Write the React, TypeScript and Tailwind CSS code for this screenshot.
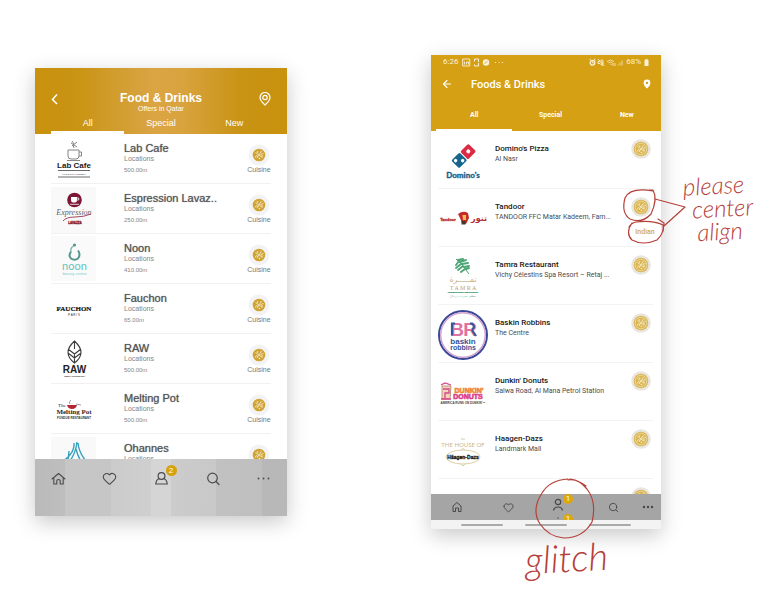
import type { ReactNode } from "react";
import { Heart, Search, ArrowLeft } from "lucide-react";

const sans = "font-['Liberation_Sans',sans-serif]";
const roboto = "font-['Roboto',sans-serif]";
const SANS = "Liberation Sans, sans-serif";
const SERIF = "Liberation Serif, serif";

type Item = { name: string; sub: string; distance?: string; tag?: string; logo: ReactNode };

/* ---------- logos of the design mock-up (46 x 49 each) ---------- */

const LabCafe = (
  <>
    <path d="M17 16h11v6q0 3-3 3h-5q-3 0-3-3zM28 18h2.500v4H28M16 26.500h13M23 14l-1-3M20 9l6 4M26 8l-5 4M21 7l2 3" fill="none" stroke="#777" strokeWidth=".9" />
    <text x="23" y="34" textAnchor="middle" fontSize="8" fontWeight="bold" fill="#251818" fontFamily="Liberation Sans Narrow, Liberation Sans, sans-serif">Lab Cafe</text>
    <path d="M7 36.500h32M7 43h32" stroke="#444" strokeWidth=".8" />
    <text x="23" y="40.500" textAnchor="middle" fontSize="2" fill="#333" fontFamily={SANS}>• THE DIGITAL CORNER •</text>
  </>
);
const Expression = (
  <>
    <rect x="0" y="3" width="45" height="46" fill="#faf9fa" />
    <circle cx="23.500" cy="16" r="7.300" fill="#7b1734" />
    <path d="M20 13h6v3q0 2.500-2 2.500h-2q-2 0-2-2.500z" fill="#fff" />
    <path d="M26 14h1.700v2H26M19 20.300h9" fill="none" stroke="#fff" strokeWidth=".8" />
    <text x="23" y="31" textAnchor="middle" fontSize="8" fontStyle="italic" fill="#666" fontFamily={SERIF}>Expression</text>
    <path d="M12 37q3-4 12-4t16-3" fill="none" stroke="#a54962" strokeWidth="1" />
    <text x="24" y="40" textAnchor="middle" fontSize="3" fontWeight="bold" fill="#7b1734" stroke="#7b1734" strokeWidth=".3" fontFamily={SANS}>LAVAZZA</text>
  </>
);
const NoonLogo = (
  <>
    <rect x="0" y="2" width="45" height="45" fill="#fafafa" />
    <path d="M20 17.500q-3 4 0 7 3.500 2.500 7 0 3-4 0-8" fill="none" stroke="#56958d" strokeWidth="2" />
    <path d="M20 18q-1-4 2.500-6" fill="none" stroke="#79b5ab" strokeWidth="1.400" />
    <circle cx="23.500" cy="11" r="1.600" fill="#56958d" />
    <text x="23.500" y="36" textAnchor="middle" fontSize="11" fill="#63c4bd" fontFamily="Lato, sans-serif">noon</text>
    <text x="23.500" y="41" textAnchor="middle" fontSize="4" fill="#7ecdc7" fontFamily={SANS}>beauty centre</text>
  </>
);
const FauchonLogo = (
  <>
    <text x="23" y="27" textAnchor="middle" fontSize="7" fontWeight="bold" fill="#111" stroke="#111" strokeWidth=".2" fontFamily={SERIF}>FAUCHON</text>
    <text x="23" y="32" textAnchor="middle" fontSize="3" fill="#333" fontFamily={SANS}>P A R I S</text>
  </>
);
const RawLogo = (
  <>
    <path d="M23.500 7q-13 12 0 22q13-10 0-22zM23.500 7v8M23.500 20v9M17 15l6.500 5 6.500-5M17 19l6.500 5 6.500-5" fill="none" stroke="#3c3c3c" strokeWidth="1.100" />
    <text x="23.500" y="39" textAnchor="middle" fontSize="10" fontWeight="bold" fill="#222" fontFamily={SANS}>RAW</text>
    <text x="23.500" y="42.500" textAnchor="middle" fontSize="2" fontWeight="bold" fill="#222" fontFamily={SANS}>SIMPLY NOURISHING</text>
  </>
);
const MeltingLogo = (
  <>
    <text x="11" y="23" textAnchor="middle" fontSize="5" fill="#222" fontFamily={SERIF}>The</text>
    <path d="M16 21h10q-1 4-5 4t-5-4" fill="#b42636" />
    <path d="M19 20q-2-2 1-4M25 20l5 1" fill="none" stroke="#777" strokeWidth=".7" />
    <text x="23" y="30" textAnchor="middle" fontSize="7" fontWeight="bold" fill="#332424" fontFamily={SERIF}>Melting Pot</text>
    <text x="23" y="35" textAnchor="middle" fontSize="3" fontWeight="bold" fill="#333" fontFamily={SANS}>FONDUE RESTAURANT</text>
  </>
);
const OhannesLogo = (
  <>
    <rect x="0" y="3" width="45" height="46" fill="#f9f9f9" />
    <path d="M23 9q1 10-11 18M26 8q-1 10-7 19M27 9q1 10 8 18M25 15q2 8 5 12M18 17l-1 10" fill="none" stroke="#39a3bf" strokeWidth="1.400" />
  </>
);

/* ---------- logos of the app build (50 x 58 each) ---------- */

const DominosLogo = (
  <>
    <g transform="rotate(45 25 25)">
      <rect x="20" y="12.500" width="11" height="11.500" rx="1.500" fill="#dd2b45" />
      <rect x="20" y="25" width="11" height="11.500" rx="1.500" fill="#17648c" />
      <circle cx="25.500" cy="18" r="2" fill="#fff" />
      <circle cx="23" cy="33.500" r="1.700" fill="#fff" />
      <circle cx="28" cy="28.500" r="1.700" fill="#fff" />
    </g>
    <text x="25" y="47" textAnchor="middle" fontSize="8" fontWeight="900" fill="#17648c" stroke="#17648c" strokeWidth=".3" fontFamily="Lato, sans-serif">Domino's</text>
  </>
);
const TandoorLogo = (
  <>
    <text x="10" y="32" textAnchor="middle" fontSize="4" fontWeight="bold" fill="#b52a35" stroke="#b52a35" strokeWidth=".3" fontFamily={SANS}>Tandoor</text>
    <path d="M20 25q5-4 10-1l1 5-3 6-4-1-2-5z" fill="#c62b2c" />
    <path d="M24.500 26h3.500v5h-3z" fill="#f0c14e" />
    <path d="M23.500 32h4v3.500h-4z" fill="#47372c" />
    <text x="41" y="32" textAnchor="middle" fontSize="8" fontWeight="bold" fill="#b52a35" fontFamily="DejaVu Sans, sans-serif">تنور</text>
  </>
);
const TamraLogo = (
  <>
    <path d="M31 27Q25 18 18 12" fill="none" stroke="#4da476" strokeWidth="1" />
    <path d="M21 14l-3 4M23 17l-5 4M25 19l-5 4M27 22l-4 3M20 13l5-1M22 15l6-2M24 17l6-1M26 20l5-1M28 22l3-1" fill="none" stroke="#4da476" strokeWidth="1.900" strokeLinecap="round" />
    <text x="25" y="35" textAnchor="middle" fontSize="8" fill="#c5b492" fontFamily="DejaVu Sans, sans-serif">تمـــــرة</text>
    <text x="25" y="43" textAnchor="middle" fontSize="6" fill="#b5a47f" fontFamily={SERIF}>T  A  M  R  A</text>
    <text x="25" y="46" textAnchor="middle" fontSize="2" fontWeight="bold" fill="#3c9a70" stroke="#3c9a70" strokeWidth=".2" fontFamily={SANS}>INTERNATIONAL RESTAURANT</text>
    <text x="25" y="50" textAnchor="middle" fontSize="3" fill="#72b598" fontFamily={SANS}>مطعم تمرة — ريتاج</text>
  </>
);
const BaskinLogo = (
  <>
    <circle cx="25" cy="30" r="24" fill="#fff" stroke="#3a4997" strokeWidth="2" />
    <circle cx="25" cy="30" r="22.300" fill="none" stroke="#d2a3cf" strokeWidth="1.500" />
    <text x="19" y="31" textAnchor="middle" fontSize="19" fontWeight="bold" fill="#df739f" fontFamily={SANS}>B</text>
    <text x="32" y="31" textAnchor="middle" fontSize="19" fontWeight="bold" fill="#df739f" fontFamily={SANS}>R</text>
    <path d="M14 18v12.500M13 18.500h4M32 18.500h2q4 3 0 6M34 25l4 6" fill="none" stroke="#3a559a" strokeWidth="2.200" />
    <text x="25" y="38.500" textAnchor="middle" fontSize="8" fontWeight="bold" fill="#33539a" fontFamily={SANS}>baskin</text>
    <text x="25" y="45" textAnchor="middle" fontSize="7" fontWeight="bold" fill="#33539a" fontFamily={SANS}>robbins</text>
  </>
);
const DunkinLogo = (
  <>
    <path d="M4 23h9l-1 13H4z" fill="#f5d5bd" stroke="#a88066" strokeWidth=".8" />
    <path d="M5 26h6v4H7v6M3 22l4-2 6 2M3 36h10" fill="none" stroke="#d94389" strokeWidth="1.300" />
    <text x="31" y="30" textAnchor="middle" fontSize="7" fontWeight="900" fill="#ef8636" stroke="#ef8636" strokeWidth=".6" fontFamily={SANS}>DUNKIN'</text>
    <text x="30" y="36" textAnchor="middle" fontSize="7" fontWeight="900" fill="#dd3e8c" stroke="#dd3e8c" strokeWidth=".6" fontFamily={SANS}>DONUTS</text>
    <text x="25" y="41" textAnchor="middle" fontSize="3" fontWeight="bold" fill="#543b34" fontFamily={SANS}>AMERICA RUNS ON DUNKIN'™</text>
  </>
);
const HaagenLogo = (
  <>
    <path d="M23 18h4" stroke="#cdbd91" strokeWidth=".8" />
    <text x="25" y="26" textAnchor="middle" fontSize="6" fill="#c9b789" fontFamily="Lato, sans-serif">THE HOUSE OF</text>
    <ellipse cx="25" cy="36" rx="17" ry="7" fill="none" stroke="#d8c89e" strokeWidth=".9" />
    <path d="M23 29l2-1.500 2 1.500M23 43l2 2 2-2" fill="none" stroke="#d8c89e" strokeWidth=".9" />
    <text x="25" y="38" textAnchor="middle" fontSize="5" fontWeight="bold" fill="#181818" stroke="#181818" strokeWidth=".3" fontFamily="Liberation Sans Narrow, Liberation Sans, sans-serif">Häagen-Dazs</text>
  </>
);

const mockItems: Item[] = [
  { name: "Lab Cafe", sub: "Locations", distance: "500.00m", logo: LabCafe },
  { name: "Espression Lavaz..", sub: "Locations", distance: "250.00m", logo: Expression },
  { name: "Noon", sub: "Locations", distance: "410.00m", logo: NoonLogo },
  { name: "Fauchon", sub: "Locations", distance: "65.00m", logo: FauchonLogo },
  { name: "RAW", sub: "Locations", distance: "500.00m", logo: RawLogo },
  { name: "Melting Pot", sub: "Locations", distance: "500.00m", logo: MeltingLogo },
  { name: "Ohannes", sub: "Locations", logo: OhannesLogo },
];

const buildItems: Item[] = [
  { name: "Domino's Pizza", sub: "Al Nasr", logo: DominosLogo },
  { name: "Tandoor", sub: "TANDOOR FFC Matar Kadeem, Fam...", tag: "Indian", logo: TandoorLogo },
  { name: "Tamra Restaurant", sub: "Vichy Célestins Spa Resort – Retaj ...", logo: TamraLogo },
  { name: "Baskin Robbins", sub: "The Centre", logo: BaskinLogo },
  { name: "Dunkin' Donuts", sub: "Salwa Road, Al Mana Petrol Station", logo: DunkinLogo },
  { name: "Haagen-Dazs", sub: "Landmark Mall", logo: HaagenLogo },
];

const tabs = ["All", "Special", "New"];

function Pizza({ soft = false }: { soft?: boolean }) {
  return (
    <svg viewBox="0 0 22 22" className="size-[22px] shrink-0" aria-hidden="true">
      <circle cx="11" cy="11" r={soft ? 9.8 : 10.5} fill={soft ? "#e9e6df" : "#f4f3f4"} />
      <circle cx="11" cy="11" r={soft ? 7.3 : 6.3} fill={soft ? "#dab654" : "#cfa437"} />
      {soft && <circle cx="11" cy="11" r="5.800" fill="none" stroke="#f0e0b0" strokeWidth=".7" />}
      <path d="M7.500 8.500l7 5M9 14l4.500-7M12.500 10.500l3-1M8 11.500l2 1" stroke="#f7ecd0" strokeWidth=".8" fill="none" />
      <g fill="#f7ecd0">
        <circle cx="9.500" cy="8" r=".8" />
        <circle cx="14" cy="12" r=".8" />
        <circle cx="11.500" cy="14.500" r=".8" />
        <circle cx="7.500" cy="12.800" r=".6" />
      </g>
    </svg>
  );
}

function Dots({ className, r }: { className: string; r: number }) {
  return (
    <svg viewBox="0 0 15 15" className={className} fill="currentColor" aria-hidden="true">
      <circle cx="2.500" cy="7.500" r={r} />
      <circle cx="7.500" cy="7.500" r={r} />
      <circle cx="12.500" cy="7.500" r={r} />
    </svg>
  );
}

function MockPhone() {
  return (
    <section className={`${sans} mt-[68px] w-[252px] shrink-0 bg-white shadow-[0_6px_20px_rgba(0,0,0,0.22)]`}>
      <header className="flex h-[66px] flex-col justify-end bg-[linear-gradient(90deg,#c8920e_0%,#ca9414_18%,#cf9a26_27%,#d4a037_38%,#dba544_48%,#d8a23c_60%,#cf9a26_72%,#c99314_82%,#c8920e_100%)] px-4 text-white">
        <div className="flex items-start justify-between">
          <button aria-label="Back" className="w-4">
            <svg viewBox="0 0 8 14" className="h-3.5 w-2" fill="none" stroke="currentColor" strokeWidth="1.500" aria-hidden="true"><path d="M6 2.500L1.500 7.500 6 12" /></svg>
          </button>
          <h1 className="text-center text-[12px] leading-[13px] font-bold">
            Food &amp; Drinks
            <small className="block text-[7px] leading-2 font-normal">Offers in Qatar</small>
          </h1>
          <button aria-label="Map" className="flex w-4 justify-end">
            <svg viewBox="0 0 12 14" className="h-3.5 w-3" fill="none" stroke="currentColor" strokeWidth="1.200" aria-hidden="true">
              <path d="M6 13Q1 8.500 1 5.500a5 5 0 0 1 10 0Q11 8.500 6 13z" /><circle cx="6" cy="5.500" r="2.200" />
            </svg>
          </button>
        </div>
        <nav className="grid grid-cols-3 text-[9px] leading-3">
          {tabs.map((t, i) => (
            <button key={t} className={`border-b-3 pt-1 pb-0.5 ${i === 0 ? "border-white" : "border-transparent"}`}>{t}</button>
          ))}
        </nav>
      </header>
      <ul className="h-[325px] overflow-hidden px-4">
        {mockItems.map((it) => (
          <li key={it.name} className="flex h-[50px] border-b border-[#f1f1f1]">
            <svg viewBox="0 0 46 49" className="h-[49px] w-[46px] shrink-0" role="img" aria-label={`${it.name} logo`}>{it.logo}</svg>
            <div className="ml-[27px] grow pt-2 text-[#858585]">
              <h2 className="text-[11px] leading-[13px] text-[#555] [text-shadow:0_0_1px_#777]">{it.name}</h2>
              <p className="text-[7px] leading-[7px]">{it.sub}</p>
              {it.distance && <p className="pt-1 text-[6px] leading-2">{it.distance}</p>}
            </div>
            <div className="flex w-6 flex-col items-center pt-2.5 text-[7px] leading-2 text-[#777]">
              <Pizza />
              {it.distance && <span>Cuisine</span>}
            </div>
          </li>
        ))}
      </ul>
      <nav className="flex h-[57px] items-start justify-between bg-[linear-gradient(90deg,#bababa_0%,#bebebe_12%,#c6c6c6_12%,#c6c6c6_30%,#cbcbcb_30%,#cfcfcf_46%,#d5d5d5_46%,#d5d5d5_54%,#cccccc_54%,#c8c8c8_72%,#c1c1c1_72%,#bfbfbf_90%,#b8b8b8_90%,#b8b8b8_100%)] px-4 pt-3 text-[#4b4b4b]">
        <button aria-label="Home">
          <svg viewBox="0 0 15 15" className="size-[15px]" fill="none" stroke="currentColor" strokeWidth="1.100" strokeLinejoin="round" strokeLinecap="round" aria-hidden="true"><path d="M1 8l6.500-5.500L14 8M2.800 7v6h3V9.500q0-1 1.700-1t1.700 1V13h3V7" /></svg>
        </button>
        <button aria-label="Favourites"><Heart className="size-[15px]" strokeWidth={1.8} /></button>
        <button aria-label="Profile" className="relative">
          <svg viewBox="0 0 15 15" className="size-[15px]" fill="none" stroke="currentColor" strokeWidth="1.200" aria-hidden="true">
            <circle cx="7.500" cy="5" r="3.400" />
            <path d="M5.200 7.500Q2 8.800 1.800 13h11.400Q13 8.800 9.800 7.500" />
          </svg>
          <span className="absolute -top-1.5 left-3 flex size-[11px] items-center justify-center rounded-full bg-[#d6a10d] text-[8px] leading-none text-white">2</span>
        </button>
        <button aria-label="Search">
          <svg viewBox="0 0 15 15" className="size-[15px]" fill="none" stroke="currentColor" strokeWidth="1.200" strokeLinecap="round" aria-hidden="true"><circle cx="7.500" cy="7" r="4.800" /><path d="M11 10.500l3 3" /></svg>
        </button>
        <button aria-label="More"><Dots className="size-[15px]" r={0.9} /></button>
      </nav>
    </section>
  );
}

function StatusBar() {
  return (
    <div className="flex h-3.5 items-center justify-between pr-3 pl-3 text-[8px] leading-none text-[#fbf1d8]">
      <div className="flex items-center gap-1">
        <span>6:26</span>
        <svg viewBox="0 0 42 9" className="h-[9px] w-[42px]" fill="none" stroke="currentColor" aria-hidden="true">
          <path d="M.700 1h7v7h-7zM2.500 3.500v3M4.500 6.500V4h2v2.500" strokeWidth=".9" />
          <path d="M12.500 3.500V1h4v3M16.500 5v3h-4v-1.500" strokeWidth="1" />
          <circle cx="24" cy="4.500" r="3.200" fill="currentColor" strokeWidth="0" />
          <path d="M22.500 5.500l3-2" stroke="#d6a015" strokeWidth=".8" />
          <path d="M33 4.500h1M36.500 4.500h1M40 4.500h1" strokeWidth="1" />
        </svg>
      </div>
      <div className="flex items-center gap-[3px]">
        <svg viewBox="0 0 34 9" className="h-[9px] w-[34px]" fill="none" stroke="currentColor" aria-hidden="true">
          <circle cx="3.500" cy="4.800" r="2.300" strokeWidth="1.300" />
          <path d="M.500 2l1.500-1.200M6.500 2L5 .800M3.500 3.500v1.500h1.200" strokeWidth=".9" />
          <path d="M9 3.500h2l2-2v6l-2-2H9zM14 2.500v4M9 1l6 7" strokeWidth=".9" />
          <path d="M18 3.500q3.500-3 7 0M19.500 5q2-1.800 4 0M21.500 6.500h1M24 5v3M26 5v3" strokeWidth=".8" />
          <path d="M29 7.500v-1M31 7.500v-3M33 7.500v-5" strokeWidth="1" opacity=".7" />
        </svg>
        <span>68%</span>
        <svg viewBox="0 0 5 8" className="h-2 w-[5px]" fill="currentColor" aria-hidden="true"><path d="M.500 2h1V1h2v1h1v6h-4z" /></svg>
      </div>
    </div>
  );
}

function BuildPhone() {
  return (
    <section className={`${roboto} w-[230px] bg-white shadow-[0_6px_20px_rgba(0,0,0,0.22)]`}>
      <header className="flex h-[76px] flex-col overflow-hidden bg-[#d6a015] text-white">
        <StatusBar />
        <div className="flex h-[30px] items-center pr-2 pl-2.5">
          <button aria-label="Back"><ArrowLeft className="size-[12px]" strokeWidth={2.2} /></button>
          <h1 className="ml-[18px] grow text-[11px] leading-none font-medium">Foods &amp; Drinks</h1>
          <button aria-label="Map">
            <svg viewBox="0 0 12 12" className="size-3" fill="currentColor" aria-hidden="true">
              <path fillRule="evenodd" d="M6 1.500a3.400 3.400 0 0 1 3.400 3.400C9.400 7.500 6 10.500 6 10.500S2.600 7.500 2.600 4.900A3.400 3.400 0 0 1 6 1.500zm0 2.200a1.200 1.200 0 1 0 0 2.400 1.200 1.200 0 0 0 0-2.400z" />
            </svg>
          </button>
        </div>
        <nav className="-mr-1 ml-[5px] grid grow grid-cols-3 text-[7px] leading-2 font-bold">
          {tabs.map((t, i) => (
            <button key={t} className={`border-b-2 pt-[9px] pb-2 ${i === 0 ? "border-white" : "border-transparent"}`}>{t}</button>
          ))}
        </nav>
      </header>
      <ul className="h-[363px] overflow-hidden pr-2 pl-[7px]">
        {buildItems.map((it) => (
          <li key={it.name} className="flex h-[58px] border-b border-[#f3f3f3]">
            <svg viewBox="0 0 50 58" className="h-[58px] w-[50px] shrink-0" role="img" aria-label={`${it.name} logo`}>{it.logo}</svg>
            <div className="ml-[7px] w-0 grow pt-3 whitespace-nowrap">
              <h2 className="text-[8px] leading-[11px] font-medium text-[#1a1a1a]">{it.name}</h2>
              <p className="text-[7px] leading-[10px] text-[#4d4d4d]">{it.sub}</p>
            </div>
            <div className="flex w-6 flex-col items-center pt-[7px]">
              <Pizza soft />
              {it.tag && <span className="ml-2 pt-2 text-[7px] leading-3 font-medium text-[#d6aa37]">{it.tag}</span>}
            </div>
          </li>
        ))}
        <li className="flex h-[58px] justify-end pt-[7px] pr-px"><Pizza soft /></li>
      </ul>
      <nav className="relative grid h-[26px] grid-cols-[52px_49px_56px_34px_auto] items-center overflow-hidden bg-[#a5a5a5] pl-5 text-[#484848]">
        <button aria-label="Home">
          <svg viewBox="0 0 12 12" className="size-3" fill="none" stroke="currentColor" aria-hidden="true"><path d="M2 5l4-3.500L10 5v5.500H7.500V7h-3v3.500H2z" /></svg>
        </button>
        <button aria-label="Favourites"><Heart className="size-[11px]" strokeWidth={2} /></button>
        <button aria-label="Profile" className="h-[20px] self-start">
          <svg viewBox="0 0 12 15" className="h-[15px] w-3" fill="none" stroke="currentColor" strokeWidth="1.200" aria-hidden="true">
            <circle cx="6" cy="5" r="2.700" /><path d="M1.500 13.500Q2 10 6 10T10.500 13.500" />
          </svg>
        </button>
        <button aria-label="Search"><Search className="size-[11px]" strokeWidth={2} /></button>
        <button aria-label="More"><Dots className="size-[12px]" r={1.5} /></button>
        <span className="absolute top-0 left-[132px] flex size-[10px] items-center justify-center rounded-full bg-[#dda80d] text-[8px] leading-none text-white">1</span>
        <span className="absolute top-5 left-[132px] flex size-[10px] items-center justify-center rounded-full bg-[#dda80d] text-[8px] leading-none text-white">1</span>
        <span className="absolute top-[23px] left-[126px] size-[2px] rounded-full bg-[#777]" />
      </nav>
      <div className="flex h-[9px] items-center justify-center gap-[22px] bg-[#f3f3f3]">
        <i className="h-[2px] w-[42px] rounded bg-[#aaa]" />
        <i className="h-[2px] w-[42px] rounded bg-[#aaa]" />
        <i className="h-[2px] w-[42px] rounded bg-[#aaa]" />
      </div>
    </section>
  );
}

function Notes() {
  return (
    <div className="pointer-events-none absolute top-0 left-0 h-[539px] w-[332px] font-['Lato',sans-serif] font-light text-[#b5403a] italic">
      <svg viewBox="431 55 332 539" className="absolute inset-0 size-full" fill="none" stroke="currentColor" strokeWidth="1.200" strokeLinecap="round" strokeLinejoin="round" aria-hidden="true">
        <path d="M653 191Q630 187 625 198Q621 213 630 219Q642 224 651 214Q658 199 653 190L649 190" />
        <path d="M632 223Q625 233 632 240Q643 246 657 240Q665 232 663 225Q653 220 636 222Q631 223 629 227" />
        <path d="M655 199L685 207L664 226M658 219L664 223L663 231" />
        <path d="M568 479Q550 480 542 493Q531 510 540 524Q549 537 564 538Q583 538 592 522Q597 502 587 489Q578 478 568 480M570 479Q578 480 586 486" />
      </svg>
      <div className="absolute top-[118px] left-[253px] -rotate-3 text-[24px] leading-[23px]">
        <p>please</p>
        <p className="pl-2">center</p>
        <p className="pl-3">align</p>
      </div>
      <p className="absolute top-[480px] left-[94px] -rotate-3 text-[38px] leading-[44px]">glitch</p>
    </div>
  );
}

export default function App() {
  return (
    <main className="flex min-h-screen items-start gap-36 overflow-hidden bg-white pl-[35px]">
      <MockPhone />
      <div className="relative mt-[55px] shrink-0">
        <BuildPhone />
        <Notes />
      </div>
    </main>
  );
}
